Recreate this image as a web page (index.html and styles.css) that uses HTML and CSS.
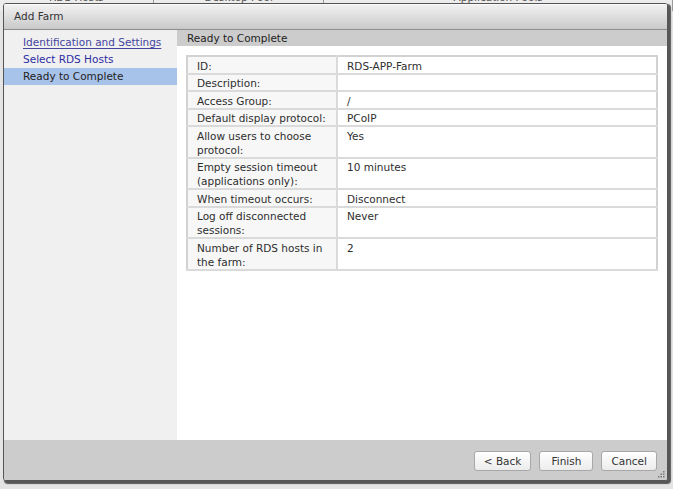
FILE: index.html
```html
<!DOCTYPE html>
<html>
<head>
<meta charset="utf-8">
<link rel="stylesheet" href="styles.css">
</head>
<body>
<div class="page-header">
  <div class="col col-1">RDS Hosts</div>
  <div class="col col-2">Desktop Pool</div>
  <div class="col col-3">Application Pools</div>
</div>
<div class="dialog">
  <div class="titlebar">Add Farm</div>
  <div class="body">
    <nav class="nav">
      <a class="nav-item visited" href="#">Identification and Settings</a>
      <a class="nav-item link" href="#">Select RDS Hosts</a>
      <div class="nav-item current">Ready to Complete</div>
    </nav>
    <main class="main">
      <div class="main-header">Ready to Complete</div>
      <table class="summary">
        <tr><td class="k">ID:</td><td class="v">RDS-APP-Farm</td></tr>
        <tr><td class="k">Description:</td><td class="v"></td></tr>
        <tr><td class="k">Access Group:</td><td class="v">/</td></tr>
        <tr><td class="k">Default display protocol:</td><td class="v">PCoIP</td></tr>
        <tr><td class="k">Allow users to choose protocol:</td><td class="v">Yes</td></tr>
        <tr><td class="k">Empty session timeout (applications only):</td><td class="v">10 minutes</td></tr>
        <tr><td class="k">When timeout occurs:</td><td class="v">Disconnect</td></tr>
        <tr><td class="k">Log off disconnected sessions:</td><td class="v">Never</td></tr>
        <tr><td class="k">Number of RDS hosts in the farm:</td><td class="v">2</td></tr>
      </table>
    </main>
  </div>
  <div class="footer">
    <button class="btn">&lt; Back</button>
    <button class="btn">Finish</button>
    <button class="btn">Cancel</button>
    <span class="grip">
      <svg width="7" height="7" viewBox="0 0 7 7"><g fill="#777"><rect x="5" y="0" width="1.5" height="1.5"/><rect x="2.5" y="2.5" width="1.5" height="1.5"/><rect x="5" y="2.5" width="1.5" height="1.5"/><rect x="0" y="5" width="1.5" height="1.5"/><rect x="2.5" y="5" width="1.5" height="1.5"/><rect x="5" y="5" width="1.5" height="1.5"/></g></svg>
    </span>
  </div>
</div>
</body>
</html>
```

FILE: styles.css
```css
html, body {
  margin: 0;
  padding: 0;
}
body {
  width: 673px;
  height: 489px;
  overflow: hidden;
  background: #e4e4e4;
  font-family: "DejaVu Sans", Verdana, sans-serif;
  font-size: 10.5px;
  color: #333;
  position: relative;
}
.page-header {
  display: flex;
  height: 20px;
  background: #ececec;
  margin-top: -9px;
}
.page-header .col {
  text-align: center;
  line-height: 13px;
  color: #555;
  border-right: 1px solid #9a9a9a;
}
.col-1 { width: 176px; }
.col-2 { width: 195px; }
.col-3 { width: 400px; }

.dialog {
  position: absolute;
  left: 3px;
  top: 3px;
  width: 663px;
  height: 476px;
  border: 1px solid #555;
  border-radius: 3px;
  box-shadow: 2px 2px 1px 1px rgba(40, 40, 40, 0.75);
  display: flex;
  flex-direction: column;
  background: #fff;
  overflow: hidden;
}
.titlebar {
  height: 25px;
  line-height: 25px;
  padding-left: 10px;
  font-size: 10.5px;
  color: #333;
  background: linear-gradient(#f2f2f2, #dedede 50%, #c9c9c9);
  border-bottom: 1px solid #8e8e8e;
  box-shadow: inset 0 1px 0 #fafafa;
}
.body {
  flex: 1;
  display: flex;
  min-height: 0;
}
.nav {
  width: 173px;
  background: #f0f0f0;
  padding-top: 4px;
  display: flex;
  flex-direction: column;
}
.nav-item {
  display: block;
  height: 17px;
  line-height: 17px;
  padding-left: 19px;
  text-decoration: none;
}
.nav-item.visited {
  color: #45459e;
  text-decoration: underline;
  text-underline-offset: 2px;
}
.nav-item.link {
  color: #2d2da3;
}
.nav-item.current {
  background: #a8c3ea;
  color: #222;
}
.main {
  flex: 1;
  background: #fff;
}
.main-header {
  height: 16px;
  line-height: 16px;
  background: #cccccc;
  padding-left: 10px;
  color: #222;
}
.summary {
  margin: 9px 0 0 9px;
  width: 472px;
  border-collapse: collapse;
  border: 2px solid #d2d2d2;
}
.summary td {
  line-height: 14px;
  padding: 1.5px 9px 0 9px;
  border-bottom: 2px solid #dadada;
  vertical-align: top;
  color: #2e2e2e;
}
.summary td.k {
  width: 130px;
  background: #f7f7f7;
  border-right: 2px solid #dadada;
}
.summary td.v {
  background: #fff;
}
.footer {
  height: 40px;
  background: #cccccc;
  display: flex;
  align-items: center;
  justify-content: flex-end;
  gap: 8px;
  padding-right: 10px;
  position: relative;
}
.btn {
  font-family: "DejaVu Sans", Verdana, sans-serif;
  font-size: 10.5px;
  color: #333;
  height: 20px;
  padding: 0 9px;
  min-width: 54px;
  background: linear-gradient(#ffffff, #ececec);
  border: 1px solid #a8a8a8;
  border-radius: 3px;
  margin-top: 1px;
}
.grip {
  position: absolute;
  right: 2px;
  bottom: 2px;
  width: 7px;
  height: 7px;
  line-height: 0;
}
```
